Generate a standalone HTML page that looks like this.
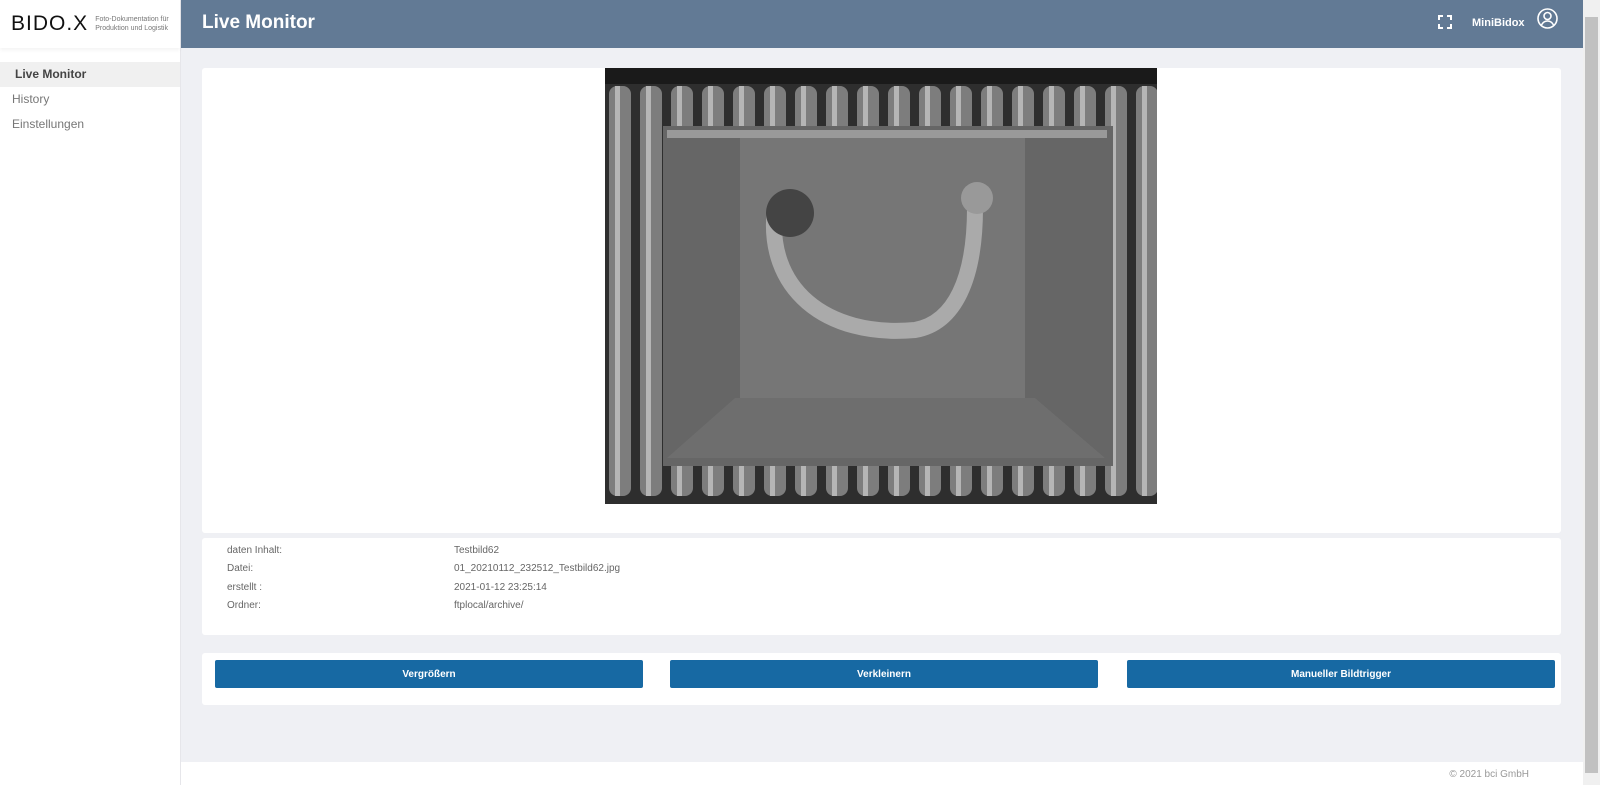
<!DOCTYPE html>
<html><head><meta charset="utf-8"><style>
*{box-sizing:border-box;margin:0;padding:0}
html,body{overflow:hidden}
body{width:1600px;height:785px;background:#eff0f4;font-family:"Liberation Sans",sans-serif;position:relative}
.side{position:absolute;left:0;top:0;width:181px;height:785px;background:#fff;border-right:1px solid #e6e6ea}
.logo{height:48px;display:flex;align-items:center;padding-left:11px;box-shadow:0 2px 4px rgba(0,0,0,.05)}
.logo b{font-weight:400;font-size:21px;letter-spacing:1px;color:#111}
.logo small{font-size:7px;color:#777;line-height:9px;margin-left:7px;display:block}
.nav{margin-top:14px}
.nav div{height:25px;line-height:25px;font-size:12px;color:#777;padding-left:12px}
.nav .act{background:#f0f0f0;color:#444;font-weight:bold;padding-left:15px}
.hdr{position:absolute;left:181px;top:0;width:1402px;height:48px;background:#627a95;color:#fff}
.hdr h1{font-size:19px;position:absolute;left:21px;top:12px}
.hdr .u{position:absolute;left:1291px;top:17px;font-size:11px;font-weight:bold}
.card{position:absolute;left:202px;width:1359px;background:#fff;border-radius:3px}
.img{position:absolute;left:403px;top:0;width:552px;height:436px;overflow:hidden;background:#222}
.rows{padding-top:7px}
.r{height:18.4px;font-size:10px;color:#666;position:relative}
.r span{position:absolute;left:25px}.r i{font-style:normal;position:absolute;left:252px}
.btn{position:absolute;top:7px;height:28px;width:428px;background:#1769a3;color:#fff;font-size:10px;font-weight:bold;text-align:center;line-height:30px;border-radius:2px}
.foot{position:absolute;left:181px;top:762px;width:1402px;height:23px;background:#fff;font-size:10px;color:#999;text-align:right;padding-right:54px;line-height:26px}
.sb{position:absolute;left:1583px;top:0;width:17px;height:785px;background:#f0f0f0}
.sb div{position:absolute;left:2px;top:17px;width:13px;height:756px;background:#c1c1c1}
</style></head><body>
<div class="side"><div class="logo"><b>BIDO.X</b><small>Foto-Dokumentation für<br>Produktion und Logistik</small></div>
<div class="nav"><div class="act">Live Monitor</div><div>History</div><div>Einstellungen</div></div></div>
<div class="hdr"><h1>Live Monitor</h1>
<svg style="position:absolute;left:1257px;top:15px" width="14" height="14" viewBox="0 0 14 14" fill="none" stroke="#fff" stroke-width="2"><path d="M1 5V1h4M9 1h4v4M13 9v4H9M5 13H1V9"/></svg>
<span class="u">MiniBidox</span>
<svg style="position:absolute;left:1356px;top:8px" width="21" height="21" viewBox="0 0 21 21" fill="none" stroke="#fff" stroke-width="1.6"><circle cx="10.5" cy="10.5" r="9.5"/><circle cx="10.5" cy="8" r="3.5"/><path d="M4.5 17c1.5-3 3.5-4 6-4s4.5 1 6 4"/></svg></div>
<div class="card" style="top:68px;height:465px"><div class="img">
<svg width="552" height="436"><defs><pattern id="p" width="31" height="436" patternUnits="userSpaceOnUse"><rect width="31" height="436" fill="#2e2e2e"/><rect x="4" y="18" width="22" height="410" rx="8" fill="#7d7d7d"/><rect x="10" y="18" width="5" height="410" fill="#b5b5b5"/></pattern></defs>
<rect width="552" height="436" fill="url(#p)"/><rect width="552" height="16" fill="#1a1a1a"/>
<rect x="58" y="58" width="450" height="340" fill="#666"/><rect x="62" y="62" width="440" height="8" fill="#999"/>
<rect x="135" y="70" width="285" height="260" fill="#767676"/><path d="M62 390 L130 330 L430 330 L500 390Z" fill="#6e6e6e"/>
<path d="M170 140 C160 220 220 270 310 262 C350 255 370 210 370 140" stroke="#aaa" stroke-width="16" fill="none"/><circle cx="372" cy="130" r="16" fill="#999"/><circle cx="185" cy="145" r="24" fill="#444"/></svg></div></div>
<div class="card" style="top:538px;height:97px"><div class="rows">
<div class="r"><span>daten Inhalt:</span><i>Testbild62</i></div>
<div class="r"><span>Datei:</span><i>01_20210112_232512_Testbild62.jpg</i></div>
<div class="r"><span>erstellt :</span><i>2021-01-12 23:25:14</i></div>
<div class="r"><span>Ordner:</span><i>ftplocal/archive/</i></div></div></div>
<div class="card" style="top:653px;height:52px">
<div class="btn" style="left:13px">Vergrößern</div><div class="btn" style="left:468px">Verkleinern</div><div class="btn" style="left:925px">Manueller Bildtrigger</div></div>
<div class="foot">© 2021 bci GmbH</div>
<div class="sb"><div></div></div>
</body></html>
